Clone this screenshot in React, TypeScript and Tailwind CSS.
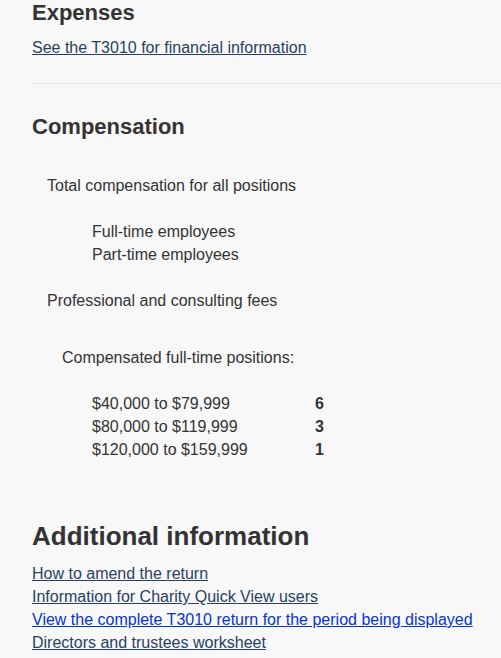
const ranges = [
  { label: '$40,000 to $79,999', count: 6 },
  { label: '$80,000 to $119,999', count: 3 },
  { label: '$120,000 to $159,999', count: 1 },
];

const links = [
  { text: 'How to amend the return', visited: false },
  { text: 'Information for Charity Quick View users', visited: false },
  { text: 'View the complete T3010 return for the period being displayed', visited: true },
  { text: 'Directors and trustees worksheet', visited: false },
];

export default function App() {
  return (
    <div className="min-h-[658px] bg-[#f8f8f8] pl-8 pt-px font-['Liberation_Sans',Arial,sans-serif] text-[16px] leading-[23px] text-[#333]">
      <h2 className="text-[22px] font-bold leading-[24px]">Expenses</h2>
      <p className="mt-[11px]">
        <a href="#" className="text-[#284162] underline">
          See the T3010 for financial information
        </a>
      </p>
      <hr className="mt-6 border-t border-[#e5e5e5]" />

      <h2 className="mt-[31px] text-[22px] font-bold leading-[24px]">Compensation</h2>
      <div className="mt-[35px] pl-[15px]">Total compensation for all positions</div>
      <div className="mt-[23px] pl-[60px]">
        <div>Full-time employees</div>
        <div>Part-time employees</div>
      </div>
      <div className="mt-[23px] pl-[15px]">Professional and consulting fees</div>
      <div className="mt-[34px] pl-[30px]">Compensated full-time positions:</div>
      <div className="mt-[23px] grid grid-cols-[223px_auto] pl-[60px]">
        {ranges.map((r) => (
          <div key={r.label} className="contents">
            <span>{r.label}</span>
            <span className="font-bold">{r.count}</span>
          </div>
        ))}
      </div>

      <h2 className="mt-[61px] text-[26px] font-bold leading-[29px]">Additional information</h2>
      <ul className="mt-[11px]">
        {links.map((l) => (
          <li key={l.text}>
            <a href="#" className={`underline ${l.visited ? 'text-[#0535d2]' : 'text-[#284162]'}`}>
              {l.text}
            </a>
          </li>
        ))}
      </ul>
    </div>
  );
}
